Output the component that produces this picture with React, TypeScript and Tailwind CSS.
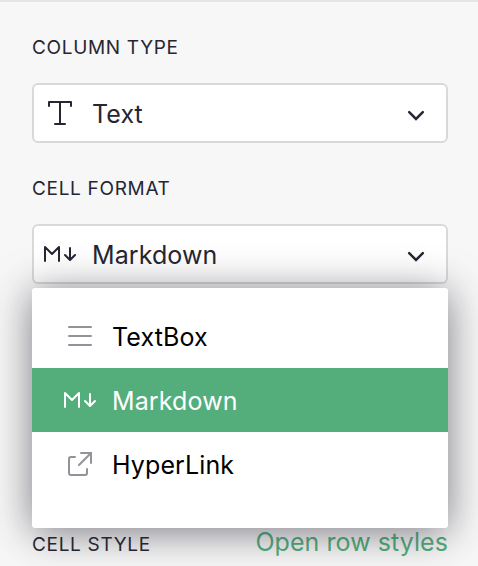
import type { ReactNode } from "react";

function TextIcon() {
  return (
    <svg className="h-8 w-8" viewBox="0 0 32 32" fill="none" stroke="currentColor" strokeWidth="2" strokeLinecap="round" strokeLinejoin="round">
      <path d="M5 9V5h22v4M16 5v22M11 27h10" />
    </svg>
  );
}

function MarkdownIcon() {
  return (
    <svg className="h-8 w-8 overflow-visible" viewBox="0 0 32 32" fill="none" stroke="currentColor" strokeWidth="2" strokeLinecap="round" strokeLinejoin="round">
      <path d="M1 23V9l7 7 7-7v14M26 10v11M21 17l5 5 5-5" />
    </svg>
  );
}

function LinesIcon() {
  return (
    <svg className="h-8 w-8" viewBox="0 0 32 32" fill="none" stroke="currentColor" strokeWidth="2" strokeLinecap="round">
      <path d="M5 7h22M5 16h22M5 25h22" />
    </svg>
  );
}

function LinkIcon() {
  return (
    <svg className="h-8 w-8" viewBox="0 0 32 32" fill="none" stroke="currentColor" strokeWidth="2" strokeLinecap="round" strokeLinejoin="round">
      <path d="M11 9H7a2 2 0 0 0-2 2v14a2 2 0 0 0 2 2h14a2 2 0 0 0 2-2v-4" />
      <path d="M17 5h10v10M27 5L15 17" strokeLinejoin="miter" />
    </svg>
  );
}

function Chevron() {
  return (
    <svg className="h-5 w-5" viewBox="0 0 20 20" fill="none" stroke="currentColor" strokeWidth="2.500" strokeLinecap="round" strokeLinejoin="miter">
      <path d="M3.200 7.200L10 14l6.800-6.800" />
    </svg>
  );
}

function Label({ children }: { children: ReactNode }) {
  return <div className="text-[19px] leading-6 tracking-[0.680px]">{children}</div>;
}

function Select({ icon, label }: { icon: ReactNode; label: string }) {
  return (
    <div className="flex h-[60px] items-center rounded-md border-2 border-[#d9d9d9] bg-white pr-5 pl-2.5">
      {icon}
      <span className="ml-4 flex-1 pt-0.5 text-[25px] leading-8 tracking-[0.090px]">{label}</span>
      <span className="pt-1"><Chevron /></span>
    </div>
  );
}

function Option({ icon, label, selected = false }: { icon: ReactNode; label: string; selected?: boolean }) {
  return (
    <div className={selected ? "flex h-16 items-center bg-[#53ae7b] pl-8 text-white" : "flex h-16 items-center pl-8 text-black"}>
      <span className={selected ? "text-white" : "text-[#929299]"}>{icon}</span>
      <span className="ml-4 pt-0.5 text-[25px] leading-8 tracking-[0.120px]">{label}</span>
    </div>
  );
}

export default function App() {
  return (
    <div className="h-[566px] w-[478px] overflow-hidden border-t-2 border-[#e5e5e5] bg-[#f7f7f7] px-8 pr-[30px] font-['Inter',sans-serif] text-[#262633]">
      <div className="w-[416px] pt-[34px]">
        <Label>COLUMN TYPE</Label>
        <div className="mt-[23px]"><Select icon={<TextIcon />} label="Text" /></div>
        <div className="mt-[34px]"><Label>CELL FORMAT</Label></div>
        <div className="relative mt-[23px]">
          <Select icon={<MarkdownIcon />} label="Markdown" />
          <div className="absolute top-16 left-0 z-10 h-60 w-full rounded-[3px] bg-white pt-4 shadow-[0_4px_40px_0_rgba(38,38,51,0.6)]">
            <Option icon={<LinesIcon />} label="TextBox" />
            <Option icon={<MarkdownIcon />} label="Markdown" selected />
            <Option icon={<LinkIcon />} label="HyperLink" />
          </div>
        </div>
        <div className="mt-[242px] flex items-center justify-between">
          <div className="pt-[6px]"><Label>CELL STYLE</Label></div>
          <span className="text-[25px] leading-8 tracking-[0.060px] text-[#53ae7b]">Open row styles</span>
        </div>
      </div>
    </div>
  );
}
